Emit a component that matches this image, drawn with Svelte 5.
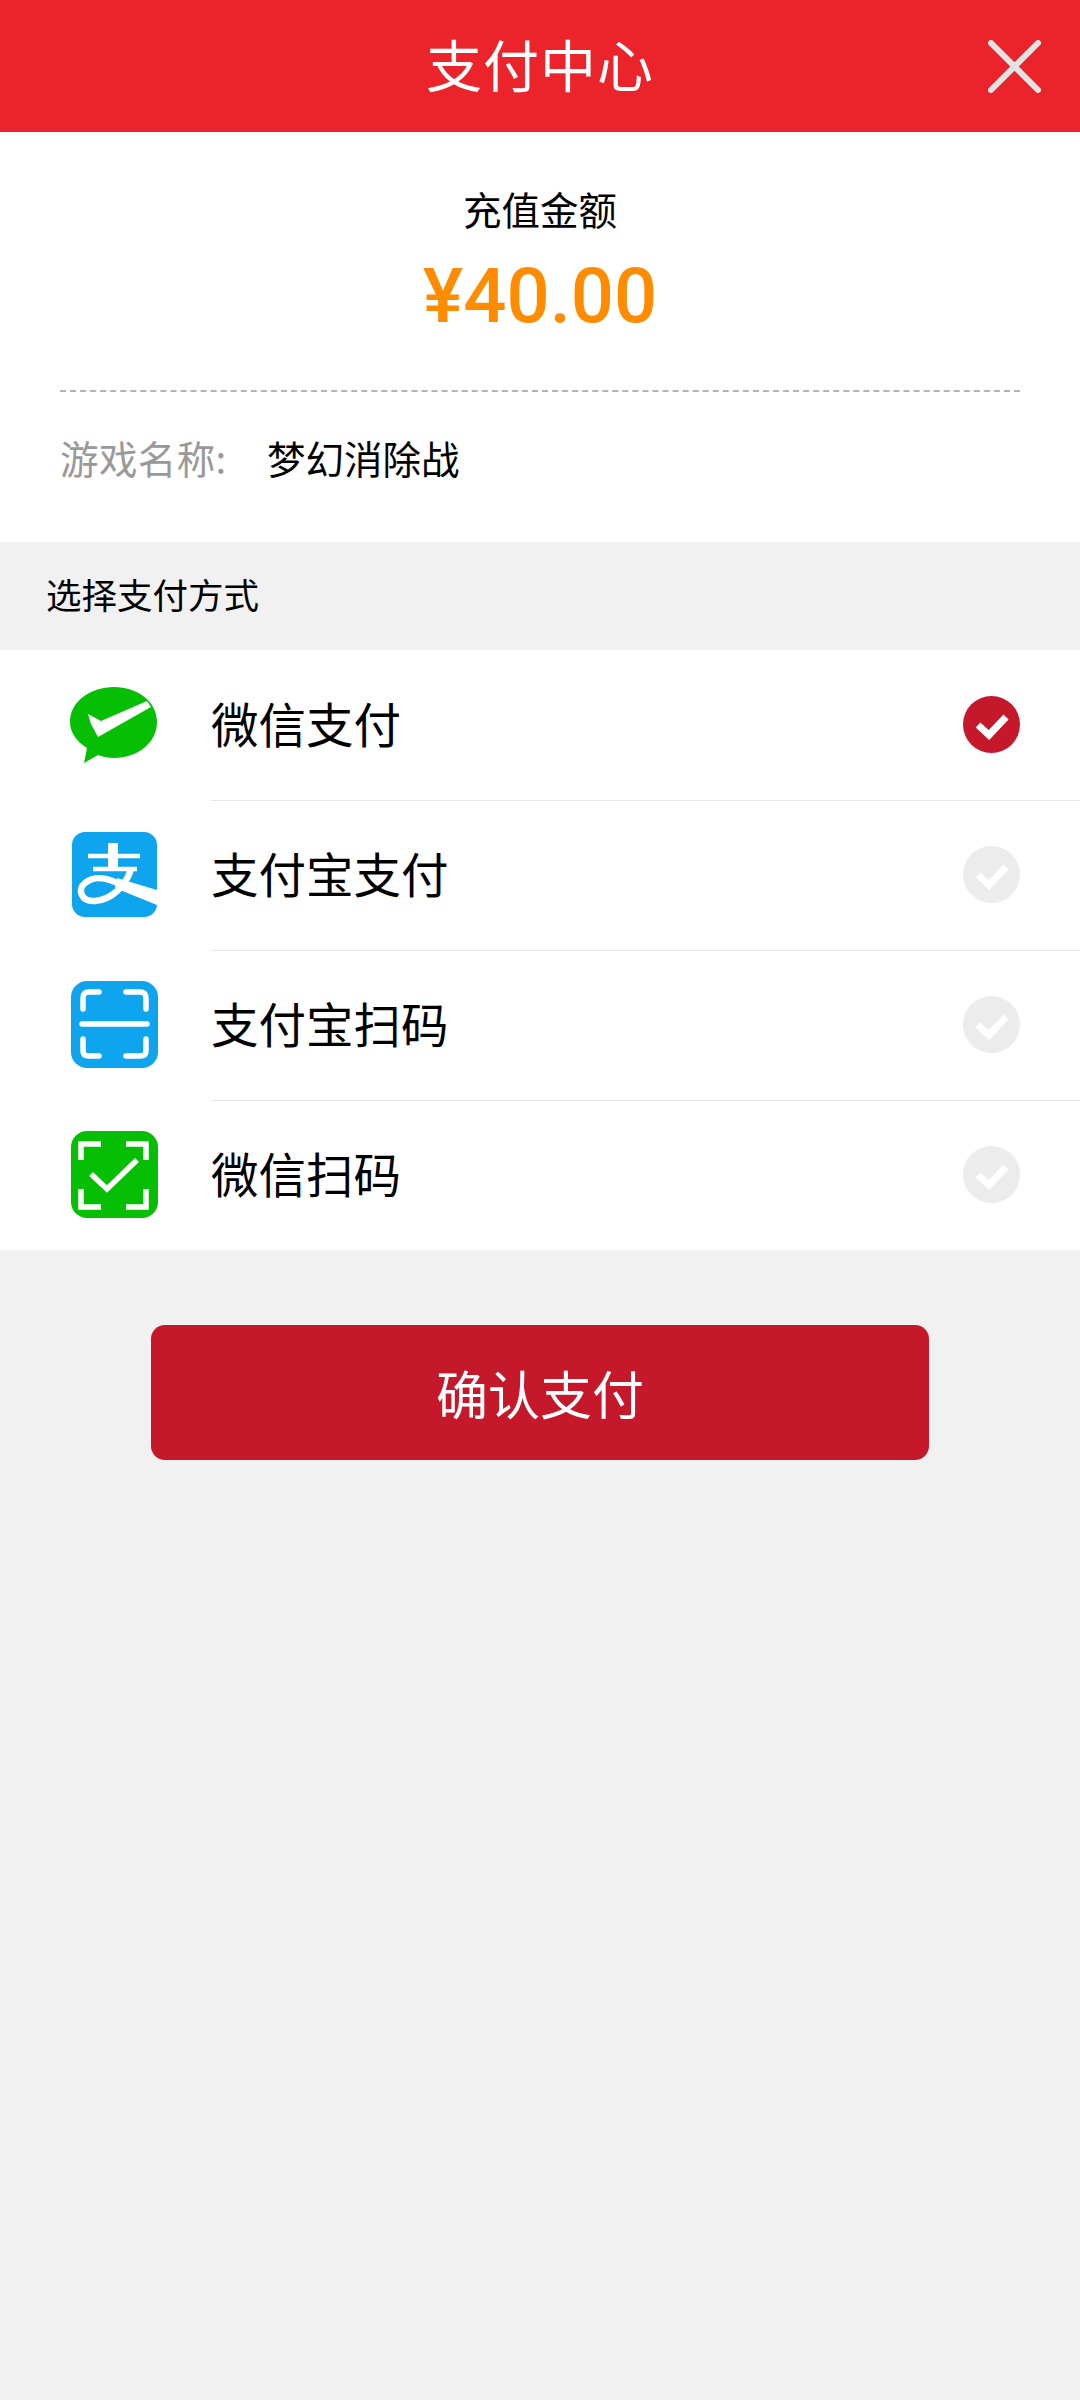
<script>
	const methods = [
		{ id: 'wechat', name: '微信支付', checked: true },
		{ id: 'alipay', name: '支付宝支付' },
		{ id: 'alipay-scan', name: '支付宝扫码' },
		{ id: 'wechat-scan', name: '微信扫码' }
	];
</script>

<div class="page">
	<header class="top">
		<h1>支付中心</h1>
		<svg class="close" viewBox="0 0 53 53" aria-label="关闭">
			<path d="M3 3 L50 50 M50 3 L3 50" />
		</svg>
	</header>

	<section class="summary">
		<div class="label">充值金额</div>
		<div class="amount">¥40.00</div>
		<div class="game">
			<span class="key">游戏名称:</span>
			<span class="val">梦幻消除战</span>
		</div>
	</section>

	<div class="section-title">选择支付方式</div>

	<ul class="methods">
		{#each methods as m}
			<li>
				<span class="icon">
					{#if m.id === 'wechat'}
						<svg viewBox="0 0 87 87">
							<path class="green" d="M43 6 C66 6 86 20 86 41 C86 62 66 77 43 77 C37 77 32 76 27 74 L13 82 L16 67 C5 60 -1 51 -1 41 C-1 20 20 6 43 6 Z" />
							<path class="white" d="M17 33 L30 40 L76 20 L80 26 L27 56 L20 43 Z" />
						</svg>
					{:else if m.id === 'alipay'}
						<svg viewBox="0 0 87 87">
							<rect class="blue" x="1" y="1" width="85" height="85" rx="13" />
							<g class="stroke">
								<path class="s4" d="M17 25 H69" />
								<path class="s10" d="M42 12 V38" />
								<path class="s4" d="M22 38 H66" />
								<path class="s6" d="M60 38 C55 55 40 69 24 70 C10 71 6 58 14 52 C24 44 38 47 50 54" />
							</g>
							<path class="white" d="M46 47 L86 59 V74 L44 57 Z" />
						</svg>
					{:else if m.id === 'alipay-scan'}
						<svg viewBox="0 0 87 87">
							<rect class="blue" x="0" y="0" width="87" height="87" rx="16" />
							<g class="stroke round">
								<path class="s5" d="M12 28 V17 Q12 11 18 11 H28 M55 11 H69 Q75 11 75 17 V28 M12 58 V70 Q12 75 18 75 H28 M55 75 H69 Q75 75 75 70 V58" />
								<path class="s5" d="M11 43 H76" />
							</g>
						</svg>
					{:else}
						<svg viewBox="0 0 87 87">
							<rect class="green" x="0" y="0" width="87" height="87" rx="16" />
							<g class="stroke">
								<path class="s5" d="M10 29 V13 H30 M55 13 H75 V29 M10 58 V76 H30 M55 76 H75 V58" />
								<path class="s5" d="M20 43 L36 58 L66 29" />
							</g>
						</svg>
					{/if}
				</span>
				<span class="name">{m.name}</span>
				<svg class="tick" class:on={m.checked} viewBox="0 0 57 57">
					<circle cx="28.5" cy="28.5" r="28.5" />
					<path d="M15 29 L26 39 L43 21" />
				</svg>
			</li>
		{/each}
	</ul>

	<button class="pay">确认支付</button>
</div>

<style>
	:global(body) {
		margin: 0;
		background: #f1f1f1;
	}
	.page {
		min-height: 2400px;
		background: #f1f1f1;
		font-family: 'Noto Sans CJK SC', 'Noto Sans', sans-serif;
	}
	.top {
		height: 132px;
		box-sizing: border-box;
		padding-bottom: 7px;
		background: #ea242a;
		display: flex;
		align-items: center;
		justify-content: center;
		position: relative;
	}
	.top h1 {
		margin: 0;
		color: #fff;
		font-size: 56px;
		font-weight: 400;
		letter-spacing: 1px;
	}
	.close {
		position: absolute;
		right: 39px;
		top: 40px;
		width: 53px;
		height: 53px;
	}
	.close path {
		stroke: #e3e3e3;
		stroke-width: 6;
		stroke-linecap: round;
		fill: none;
	}
	.summary {
		background: #fff;
		height: 410px;
		padding: 0 60px;
		box-sizing: border-box;
		text-align: center;
	}
	.label {
		padding-top: 48px;
		font-size: 38.5px;
		line-height: 56px;
		color: #000;
	}
	.amount {
		margin-top: 14px;
		font-family: Roboto, sans-serif;
		font-size: 76px;
		line-height: 92px;
		font-weight: 500;
		color: #ff8c00;
	}
	.game {
		margin-top: 48px;
		border-top: 2px dashed #b4b4b4;
		padding-top: 37px;
		display: flex;
		gap: 29px;
		font-size: 38.5px;
		line-height: 56px;
		text-align: left;
	}
	.key {
		color: #999;
		width: 178px;
		white-space: nowrap;
		letter-spacing: 0.4px;
	}
	.val {
		color: #000;
	}
	.section-title {
		height: 108px;
		box-sizing: border-box;
		padding: 0 0 6px 46px;
		display: flex;
		align-items: center;
		font-size: 35.5px;
		color: #000;
	}
	.methods {
		margin: 0;
		padding: 0;
		list-style: none;
		background: #fff;
	}
	.methods li {
		height: 150px;
		display: flex;
		align-items: center;
		position: relative;
	}
	.methods li + li::before {
		content: '';
		position: absolute;
		left: 211px;
		right: 0;
		top: 0;
		height: 1px;
		background: #e6e6e6;
	}
	.icon {
		width: 87px;
		height: 87px;
		margin: 0 0 2px 71px;
		flex: none;
	}
	.icon svg {
		display: block;
		width: 87px;
		height: 87px;
		overflow: visible;
	}
	.green {
		fill: #06bf04;
	}
	.blue {
		fill: #0ea5ee;
	}
	.white {
		fill: #fff;
	}
	.stroke path {
		fill: none;
		stroke: #fff;
	}
	.round path {
		stroke-linecap: round;
	}
	.s4 {
		stroke-width: 4.5;
	}
	.s5 {
		stroke-width: 5.5;
	}
	.s6 {
		stroke-width: 6.5;
	}
	.s10 {
		stroke-width: 10;
	}
	.name {
		margin-left: 53px;
		padding-bottom: 6px;
		flex: 1;
		font-size: 47.5px;
		color: #000;
	}
	.tick {
		width: 57px;
		height: 57px;
		margin: 0 60px 2px 0;
		flex: none;
	}
	.tick circle {
		fill: #ececec;
	}
	.tick.on circle {
		fill: #c5182b;
	}
	.tick path {
		fill: none;
		stroke: #fff;
		stroke-width: 7;
	}
	.pay {
		display: block;
		width: 778px;
		height: 135px;
		margin: 75px auto 0;
		border: 0;
		border-radius: 14px;
		background: #c5182b;
		color: #fff;
		font-family: inherit;
		font-size: 52px;
	}
</style>
